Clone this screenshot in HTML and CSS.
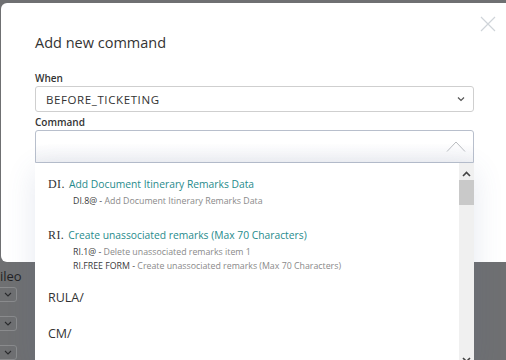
FILE: index.html
```html
<!DOCTYPE html>
<html lang="en">
<head>
  <meta charset="UTF-8">
  <meta name="viewport" content="width=device-width, initial-scale=1.0">
  <title>Add new command</title>
  <link rel="stylesheet" href="styles.css">
</head>
<body>
  <div class="modal">
    <button class="close-btn" aria-label="Close">
      <svg width="16" height="16" viewBox="0 0 16 16"><path d="M1 1 L15 15 M15 1 L1 15" stroke="#cfd4d9" stroke-width="1.2" fill="none"/></svg>
    </button>
    <h2 class="modal-title">Add new command</h2>

    <label class="field-label">When</label>
    <div class="select-box">
      <span>BEFORE_TICKETING</span>
      <svg width="8" height="6" viewBox="0 0 8 6"><path d="M1 1.5 L4 4.5 L7 1.5" stroke="#555" stroke-width="1.2" fill="none"/></svg>
    </div>

    <label class="field-label">Command</label>
    <div class="combo">
      <div class="combo-input">
        <svg width="20" height="11" viewBox="0 0 20 11"><path d="M1 10.5 L10 1 L19 10.5" stroke="#b9bcc0" stroke-width="1" fill="none"/></svg>
      </div>

      <div class="dropdown">
        <ul class="cmd-list">
          <li class="cmd-group">
            <div class="cmd-head"><span class="cmd-code">DI.</span> <span class="cmd-name">Add Document Itinerary Remarks Data</span></div>
            <div class="cmd-sub"><span class="sub-code">DI.8@</span> - <span class="sub-desc">Add Document Itinerary Remarks Data</span></div>
          </li>
          <li class="cmd-group">
            <div class="cmd-head"><span class="cmd-code">RI.</span> <span class="cmd-name">Create unassociated remarks (Max 70 Characters)</span></div>
            <div class="cmd-sub"><span class="sub-code">RI.1@</span> - <span class="sub-desc">Delete unassociated remarks item 1</span></div>
            <div class="cmd-sub"><span class="sub-code">RI.FREE FORM</span> - <span class="sub-desc">Create unassociated remarks (Max 70 Characters)</span></div>
          </li>
          <li class="cmd-plain">RULA/</li>
          <li class="cmd-plain">CM/</li>
        </ul>
        <div class="scrollbar">
          <svg class="arrow-up" width="9" height="6" viewBox="0 0 9 6"><path d="M1 5 L4.5 1.5 L8 5" stroke="#444" stroke-width="1.6" fill="none"/></svg>
          <div class="thumb"></div>
          <svg class="arrow-down" width="9" height="6" viewBox="0 0 9 6"><path d="M1 1 L4.5 4.5 L8 1" stroke="#444" stroke-width="1.6" fill="none"/></svg>
        </div>
      </div>
    </div>
  </div>

  <div class="page-behind">
    <span class="behind-label">ileo</span>
    <div class="behind-select"><svg width="8" height="5" viewBox="0 0 8 5"><path d="M1 1 L4 4 L7 1" stroke="#2a2b2d" stroke-width="1.1" fill="none"/></svg></div>
    <div class="behind-select"><svg width="8" height="5" viewBox="0 0 8 5"><path d="M1 1 L4 4 L7 1" stroke="#2a2b2d" stroke-width="1.1" fill="none"/></svg></div>
    <div class="behind-select"><svg width="8" height="5" viewBox="0 0 8 5"><path d="M1 1 L4 4 L7 1" stroke="#2a2b2d" stroke-width="1.1" fill="none"/></svg></div>
  </div>
</body>
</html>
```

FILE: styles.css
```css
html, body {
  margin: 0;
  padding: 0;
  height: 100%;
  overflow: hidden;
}

body {
  background-color: #6f7072;
  font-family: "Open Sans", "Noto Sans", sans-serif;
  color: #333;
  padding: 3px 0 0 1px;
  box-sizing: border-box;
}

.modal {
  position: relative;
  width: 540px;
  height: 259px;
  background: #fff;
  border-radius: 6px 0 0 6px;
  padding: 29px 0 0 34px;
  box-sizing: border-box;
  z-index: 2;
}

.close-btn {
  position: absolute;
  left: 479px;
  top: 13px;
  border: none;
  background: none;
  padding: 0;
  cursor: pointer;
}

.modal-title {
  margin: 0 0 17px;
  font-size: 14.5px;
  font-weight: 400;
  line-height: 22px;
  color: #333;
}

.field-label {
  display: block;
  font-size: 10px;
  font-weight: 600;
  line-height: 14px;
  color: #333;
  margin-bottom: 1px;
}

.select-box {
  width: 439px;
  height: 26px;
  box-sizing: border-box;
  border: 1px solid #cfcfcf;
  border-radius: 3px;
  display: flex;
  align-items: center;
  justify-content: space-between;
  padding: 0 8px 0 10px;
  font-size: 11.5px;
  letter-spacing: 0.6px;
  color: #333;
  margin-bottom: 3px;
}

.combo {
  position: relative;
  width: 439px;
}

.combo-input {
  height: 33px;
  box-sizing: border-box;
  border: 1px solid #b8bfcc;
  border-radius: 3px 3px 0 0;
  background: linear-gradient(180deg, #ffffff 0%, #ffffff 40%, #f1f2f5 100%);
  display: flex;
  align-items: flex-end;
  justify-content: flex-end;
  padding: 0 7px 10px 0;
}

.dropdown {
  position: absolute;
  left: 0;
  top: 33px;
  width: 439px;
  height: 200px;
  background: #fff;
  box-shadow: 0 8px 28px rgba(70, 90, 150, 0.14);
  display: flex;
  z-index: 5;
}

.cmd-list {
  list-style: none;
  margin: 0;
  padding: 10px 0 0 13px;
  flex: 1;
}

.cmd-group {
  margin-bottom: 16px;
}

.cmd-head {
  line-height: 18px;
  margin-bottom: 1px;
}

.cmd-code {
  font-family: "Liberation Serif", "DejaVu Serif", serif;
  font-size: 12px;
  letter-spacing: 0.4px;
  color: #333;
}

.cmd-name {
  font-size: 10.3px;
  color: #1f8b8c;
}

.cmd-sub {
  padding-left: 25px;
  font-size: 8.8px;
  line-height: 14px;
  color: #444;
}

.sub-code {
  color: #3a3a3a;
}

.sub-desc {
  color: #8a8a8a;
}

.cmd-plain {
  font-size: 12.5px;
  line-height: 18px;
  color: #333;
  margin-bottom: 18px;
}

.scrollbar {
  width: 15px;
  background: #f0f0f0;
  display: flex;
  flex-direction: column;
  align-items: center;
  position: relative;
}

.arrow-up {
  margin-top: 8px;
}

.thumb {
  width: 15px;
  height: 25px;
  background: #c9c9c9;
  margin-top: 3px;
}

.arrow-down {
  position: absolute;
  top: 194px;
}

.page-behind {
  display: flex;
  flex-direction: column;
  padding-top: 5px;
}

.behind-label {
  font-size: 13px;
  line-height: 18px;
  color: #232325;
  margin-left: -1px;
}

.behind-select {
  width: 22px;
  height: 15px;
  margin-left: -6px;
  margin-top: 2px;
  margin-bottom: 12px;
  border: 1px solid #8a8b8d;
  border-radius: 3px;
  display: flex;
  align-items: center;
  justify-content: flex-end;
  padding-right: 4px;
  box-sizing: border-box;
}
```
